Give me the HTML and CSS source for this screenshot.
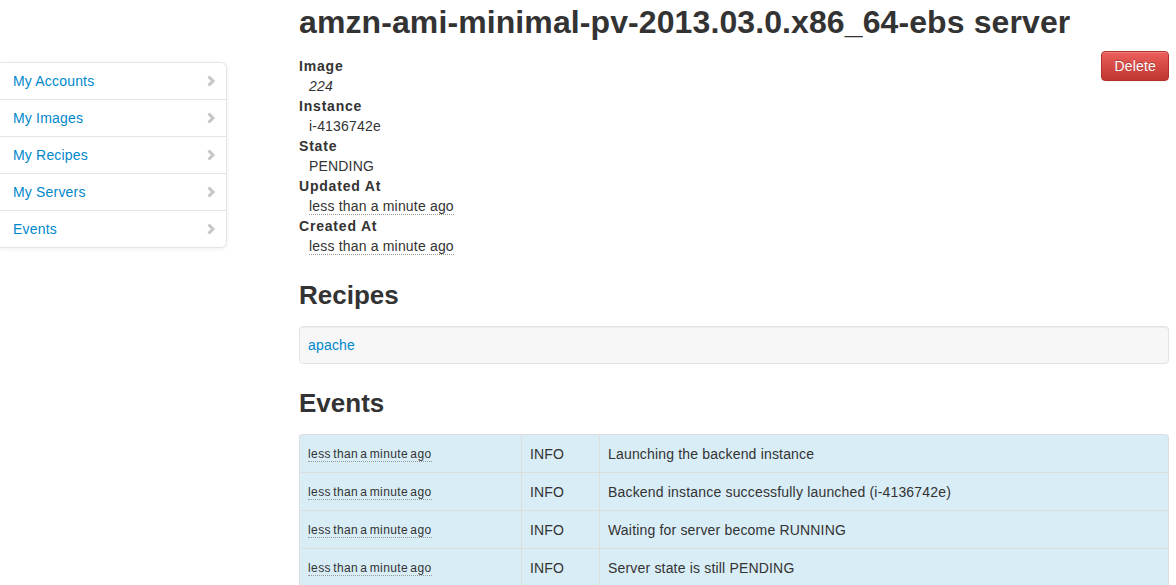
FILE: index.html
```html
<!DOCTYPE html>
<html>
<head>
<meta charset="utf-8">
<link rel="stylesheet" href="styles.css">
</head>
<body>
<div class="layout">
  <aside class="side">
    <ul class="sidenav">
      <li><a href="#">My Accounts</a><span class="chev"><svg width="10" height="12" viewBox="0 0 10 12"><path d="M2.5 1.5 L7 6 L2.5 10.5" fill="none" stroke="#c6c6c6" stroke-width="3"/></svg></span></li>
      <li><a href="#">My Images</a><span class="chev"><svg width="10" height="12" viewBox="0 0 10 12"><path d="M2.5 1.5 L7 6 L2.5 10.5" fill="none" stroke="#c6c6c6" stroke-width="3"/></svg></span></li>
      <li><a href="#">My Recipes</a><span class="chev"><svg width="10" height="12" viewBox="0 0 10 12"><path d="M2.5 1.5 L7 6 L2.5 10.5" fill="none" stroke="#c6c6c6" stroke-width="3"/></svg></span></li>
      <li><a href="#">My Servers</a><span class="chev"><svg width="10" height="12" viewBox="0 0 10 12"><path d="M2.5 1.5 L7 6 L2.5 10.5" fill="none" stroke="#c6c6c6" stroke-width="3"/></svg></span></li>
      <li><a href="#">Events</a><span class="chev"><svg width="10" height="12" viewBox="0 0 10 12"><path d="M2.5 1.5 L7 6 L2.5 10.5" fill="none" stroke="#c6c6c6" stroke-width="3"/></svg></span></li>
    </ul>
  </aside>
  <main class="main">
    <h1 class="title">amzn-ami-minimal-pv-2013.03.0.x86_64-ebs server</h1>
    <div class="details">
      <dl class="props">
        <dt>Image</dt>
        <dd><em>224</em></dd>
        <dt>Instance</dt>
        <dd>i-4136742e</dd>
        <dt>State</dt>
        <dd>PENDING</dd>
        <dt>Updated At</dt>
        <dd><abbr class="time">less than a minute ago</abbr></dd>
        <dt>Created At</dt>
        <dd><abbr class="time">less than a minute ago</abbr></dd>
      </dl>
      <button class="btn-danger">Delete</button>
    </div>
    <h2 class="section">Recipes</h2>
    <div class="well"><a href="#">apache</a></div>
    <h2 class="section">Events</h2>
    <table class="events">
      <tr><td class="c-time"><abbr class="time small">less than a minute ago</abbr></td><td class="c-lvl">INFO</td><td>Launching the backend instance</td></tr>
      <tr><td class="c-time"><abbr class="time small">less than a minute ago</abbr></td><td class="c-lvl">INFO</td><td>Backend instance successfully launched (i-4136742e)</td></tr>
      <tr><td class="c-time"><abbr class="time small">less than a minute ago</abbr></td><td class="c-lvl">INFO</td><td>Waiting for server become RUNNING</td></tr>
      <tr><td class="c-time"><abbr class="time small">less than a minute ago</abbr></td><td class="c-lvl">INFO</td><td>Server state is still PENDING</td></tr>
    </table>
  </main>
</div>
</body>
</html>
```
FILE: styles.css
```css
* { box-sizing: border-box; }
html, body { margin: 0; padding: 0; }
body {
  font-family: "Liberation Sans", Arial, sans-serif;
  font-size: 14px;
  line-height: 20px;
  letter-spacing: 0.18px;
  color: #333;
  background: #fff;
  overflow: hidden;
}
a { color: #0088cc; text-decoration: none; }
.layout {
  display: flex;
  gap: 72px;
  padding-right: 7px;
}
.side { width: 227px; flex: none; padding-top: 62px; }
.sidenav {
  list-style: none;
  margin: 0;
  padding: 0;
  background: #fff;
  border-radius: 0 6px 6px 0;
  box-shadow: 0 1px 4px rgba(0,0,0,0.065);
}
.sidenav li {
  display: flex;
  align-items: center;
  justify-content: space-between;
  height: 38px;
  border: 1px solid #e5e5e5;
  border-left: none;
  margin-top: -1px;
  padding: 0 10px 0 13px;
}
.sidenav li:first-child { margin-top: 0; border-top-right-radius: 6px; }
.sidenav li:last-child { border-bottom-right-radius: 6px; }
.chev { display: flex; margin-top: -1px; }
.main { flex: 1; min-width: 0; }
.title {
  margin: 0;
  font-size: 32px;
  line-height: 44px;
  letter-spacing: 0.1px;
  font-weight: bold;
  color: #333;
}
.details { display: flex; justify-content: space-between; align-items: flex-start; margin-top: 12px; }
.props { margin: 0; }
.props dt { font-weight: bold; letter-spacing: 0.8px; }
.props dd { margin: 0 0 0 10px; }
.time { border-bottom: 1px dotted #999; text-decoration: none; cursor: help; }
.btn-danger {
  margin-top: -5px;
  font-family: inherit;
  font-size: 14px;
  line-height: 20px;
  letter-spacing: 0.18px;
  color: #fff;
  padding: 4px 12px 4px;
  border: 1px solid #b3312b;
  border-radius: 4px;
  background: linear-gradient(#ee5f5b, #bd362f);
  text-shadow: 0 -1px 0 rgba(0,0,0,0.25);
  box-shadow: inset 0 1px 0 rgba(255,255,255,0.2), 0 1px 2px rgba(0,0,0,0.05);
}
.section {
  margin: 19px 0 11px;
  font-size: 26px;
  line-height: 40px;
  letter-spacing: 0;
  font-weight: bold;
}
.well {
  background: #f7f7f7;
  border: 1px solid #e3e3e3;
  border-radius: 4px;
  padding: 8px 8px;
  height: 38px;
  box-shadow: inset 0 1px 1px rgba(0,0,0,0.05);
}
.events {
  width: 100%;
  border-collapse: separate;
  border-spacing: 0;
  border: 1px solid #ddd;
  border-left: none;
  border-radius: 4px;
  background: #d9edf7;
}
.events td {
  height: 38px;
  padding: 8px;
  border-left: 1px solid #ddd;
  border-top: 1px solid #ddd;
  vertical-align: middle;
}
.events tr:first-child td { border-top: none; height: 37px; }
.events .c-time { width: 222px; }
.events .c-lvl { width: 78px; }
.small { font-size: 12px; letter-spacing: 0.4px; word-spacing: -1.5px; }
```
